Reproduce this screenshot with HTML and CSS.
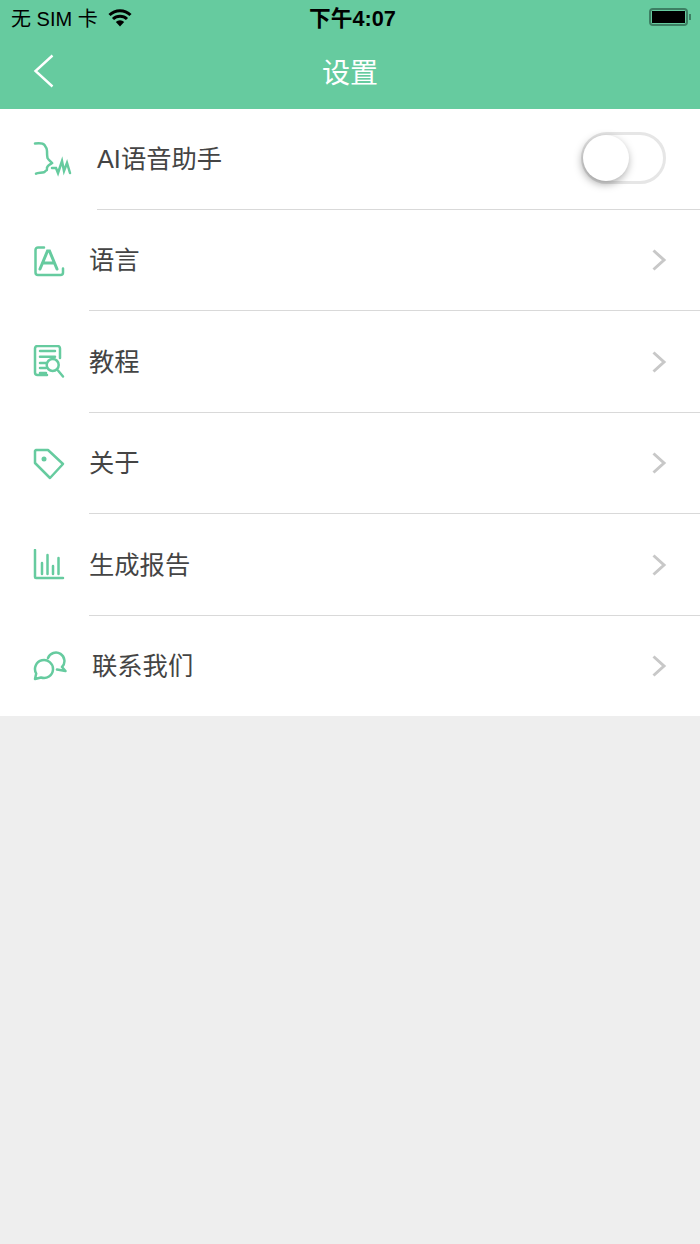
FILE: index.html
```html
<!DOCTYPE html><html lang="zh">
<head>
    <meta charset="UTF-8">
    <meta name="viewport" content="width=device-width, initial-scale=1.0">
    <title>设置</title>
    <link rel="stylesheet" href="styles.css">
</head>
<body>

<div class="header">
    <div class="status">
        <div class="status-left">
            <span class="carrier">无 SIM 卡</span>
            <svg class="wifi" width="24" height="18" viewBox="0 0 24 18">
                <path d="M12 17.500 7.800 13a6 6 0 0 1 8.400 0z" fill="#000"/>
                <path d="M5 10a10 10 0 0 1 14 0" fill="none" stroke="#000" stroke-width="3"/>
                <path d="M1.500 6a15 15 0 0 1 21 0" fill="none" stroke="#000" stroke-width="3"/>
            </svg>
        </div>
        <div class="status-time">下午4:07</div>
        <div class="status-right">
            <div class="battery"><div class="battery-fill"></div></div>
            <div class="battery-tip"></div>
        </div>
    </div>
    <div class="nav">
        <svg class="back" width="22" height="34" viewBox="0 0 22 34">
            <path d="M19.500 1.500 2.500 17l17 15.500" fill="none" stroke="#fff" stroke-width="2.400"/>
        </svg>
        <div class="nav-title">设置</div>
    </div>
</div>

<div class="list">
    <div class="row">
        <div class="icon-col wide">
            <svg class="icon" width="40" height="38" viewBox="0 0 40 38">
                <path d="M2 2.500c4-.5 8-.5 9.500 1.500 1.500 2 2.500 4 2.500 6 0 2.500 0 5 .5 7 1 2 3.500 3.500 4.500 5-1 1-3 1.500-4 3-.8 1-1.500 1.500-1 3 .3 1-.5 1.500-1.500 2-.8.5-.5 1-1.500 1.200-2.500.8-6 .5-8 1.500" class="ln"/>
                <path d="M19 27h4l2 5 4-12 2 10 3-8 3 10" class="ln"/>
            </svg>
        </div>
        <div class="row-body first">
            <span class="label">AI语音助手</span>
            <div class="toggle"><div class="knob"></div></div>
        </div>
    </div>
    <div class="row">
        <div class="icon-col">
            <svg class="icon" width="32" height="32" viewBox="0 0 32 32">
                <path d="M11 2.500H5A2.500 2.500 0 0 0 2.500 5v22.500A2.500 2.500 0 0 0 5 30h22.500a2.500 2.500 0 0 0 2.500-2.500v-4" class="ln"/>
                <path d="M7 24 14.500 6h2L24 24M9.500 18h12" class="ln heavy"/>
            </svg>
        </div>
        <div class="row-body">
            <span class="label">语言</span>
            <svg class="chevron" width="16" height="24" viewBox="0 0 16 24"><path d="M2.500 2.500 13 12 2.500 21.500" fill="none" stroke="#c8c8c8" stroke-width="3"/></svg>
        </div>
    </div>
    <div class="row tall">
        <div class="icon-col">
            <svg class="icon" width="32" height="34" viewBox="0 0 32 34">
                <path d="M14 30H4.500A2.500 2.500 0 0 1 2 27.500V3.500A2.500 2.500 0 0 1 4.500 1h20A2.500 2.500 0 0 1 27 3.500V13" class="ln"/>
                <path d="M7 6h15M7 11.700h15M7 18h6M7 23h6M7 28h6" class="ln"/>
                <circle cx="19.700" cy="20" r="6" class="ln"/>
                <path d="M25 25.500l5 6" class="ln"/>
            </svg>
        </div>
        <div class="row-body">
            <span class="label">教程</span>
            <svg class="chevron" width="16" height="24" viewBox="0 0 16 24"><path d="M2.500 2.500 13 12 2.500 21.500" fill="none" stroke="#c8c8c8" stroke-width="3"/></svg>
        </div>
    </div>
    <div class="row">
        <div class="icon-col">
            <svg class="icon" width="32" height="32" viewBox="0 0 32 32">
                <path d="M3 2h12l15 14-13 14L2 15V3z" class="ln" stroke-linejoin="round"/>
                <circle cx="11" cy="11" r="2.500" fill="#66cb9f"/>
            </svg>
        </div>
        <div class="row-body">
            <span class="label">关于</span>
            <svg class="chevron" width="16" height="24" viewBox="0 0 16 24"><path d="M2.500 2.500 13 12 2.500 21.500" fill="none" stroke="#c8c8c8" stroke-width="3"/></svg>
        </div>
    </div>
    <div class="row tall">
        <div class="icon-col">
            <svg class="icon" width="32" height="32" viewBox="0 0 32 32">
                <path d="M2 1v27a1 1 0 0 0 1 1h27" class="ln"/>
                <path d="M9 14v11M14.500 6v19M20 17v8M25.500 9v16" class="ln"/>
            </svg>
        </div>
        <div class="row-body">
            <span class="label">生成报告</span>
            <svg class="chevron" width="16" height="24" viewBox="0 0 16 24"><path d="M2.500 2.500 13 12 2.500 21.500" fill="none" stroke="#c8c8c8" stroke-width="3"/></svg>
        </div>
    </div>
    <div class="row short">
        <div class="icon-col">
            <svg class="icon" width="34" height="30" viewBox="0 0 34 30">
                <path d="M3.200 22.500A9 9 0 1 1 8 26.500L2 28z" class="ln" stroke-linejoin="round"/>
                <path d="M15 7A8.500 8.500 0 1 1 29 16L32.500 20 24 18.500" class="ln" stroke-linejoin="round"/>
            </svg>
        </div>
        <div class="row-body last">
            <span class="label">联系我们</span>
            <svg class="chevron" width="16" height="24" viewBox="0 0 16 24"><path d="M2.500 2.500 13 12 2.500 21.500" fill="none" stroke="#c8c8c8" stroke-width="3"/></svg>
        </div>
    </div>
</div>

</body>
</html>
```

FILE: styles.css
```css
body {
    margin: 0;
    height: 1244px;
    overflow: hidden;
    background: #eeeeee;
    font-family: "Liberation Sans", "Noto Sans CJK SC", sans-serif;
}

.header {
    background: #66cb9f;
    height: 109px;
}

.status {
    height: 36px;
    display: flex;
    align-items: center;
    justify-content: space-between;
    padding: 0 9px 0 11px;
    color: #000;
}

.status-left {
    width: 240px;
    display: flex;
    align-items: center;
    gap: 10px;
    font-size: 20px;
}

.carrier {
    margin-bottom: 2px;
}

.status-time {
    font-size: 21.700px;
    font-weight: 600;
    margin-bottom: 3px;
    margin-left: 3px;
}

.status-right {
    width: 240px;
    display: flex;
    align-items: center;
    justify-content: flex-end;
    gap: 1px;
    margin-bottom: 2px;
}

.battery {
    width: 39px;
    height: 18px;
    box-sizing: border-box;
    border: 2px solid #3d7f63;
    border-radius: 4px;
    padding: 1px;
}

.battery-fill {
    height: 100%;
    background: #000;
}

.battery-tip {
    width: 2px;
    height: 6px;
    background: #3d7f63;
}

.nav {
    height: 73px;
    display: flex;
    align-items: center;
    justify-content: center;
    position: relative;
}

.back {
    position: absolute;
    left: 33px;
    top: 18px;
}

.nav-title {
    color: #fff;
    font-size: 28px;
    margin-bottom: 3px;
}

.list {
    background: #fff;
}

.row {
    display: flex;
    height: 101px;
}

.row.tall {
    height: 102px;
}

.row.short {
    height: 100px;
}

.icon-col {
    width: 89px;
    flex: none;
    display: flex;
    align-items: center;
    padding-left: 33px;
    box-sizing: border-box;
}

.icon-col.wide {
    width: 97px;
}

.row-body {
    flex: 1;
    display: flex;
    align-items: center;
    justify-content: space-between;
    border-bottom: 1px solid #d9d9d9;
    padding: 0 33px 0 0;
}

.row-body.first {
    padding: 0 34px 0 0;
}

.row-body.last {
    border-bottom: none;
    padding-left: 3px;
}

.label {
    font-size: 25.300px;
    color: #444444;
    margin-bottom: 4px;
}

.icon {
    display: block;
}

.ln {
    fill: none;
    stroke: #66cb9f;
    stroke-width: 2.500;
    stroke-linecap: round;
}

.ln.heavy {
    stroke-width: 3;
}

.toggle {
    width: 85px;
    height: 52px;
    box-sizing: border-box;
    border: 3px solid #e6e6e6;
    border-radius: 26px;
    position: relative;
    margin-bottom: 2px;
}

.knob {
    position: absolute;
    left: -1px;
    top: 0;
    width: 46px;
    height: 46px;
    border-radius: 50%;
    background: #fff;
    box-shadow: -1px 3px 8px rgba(0, 0, 0, 0.35);
}
```
